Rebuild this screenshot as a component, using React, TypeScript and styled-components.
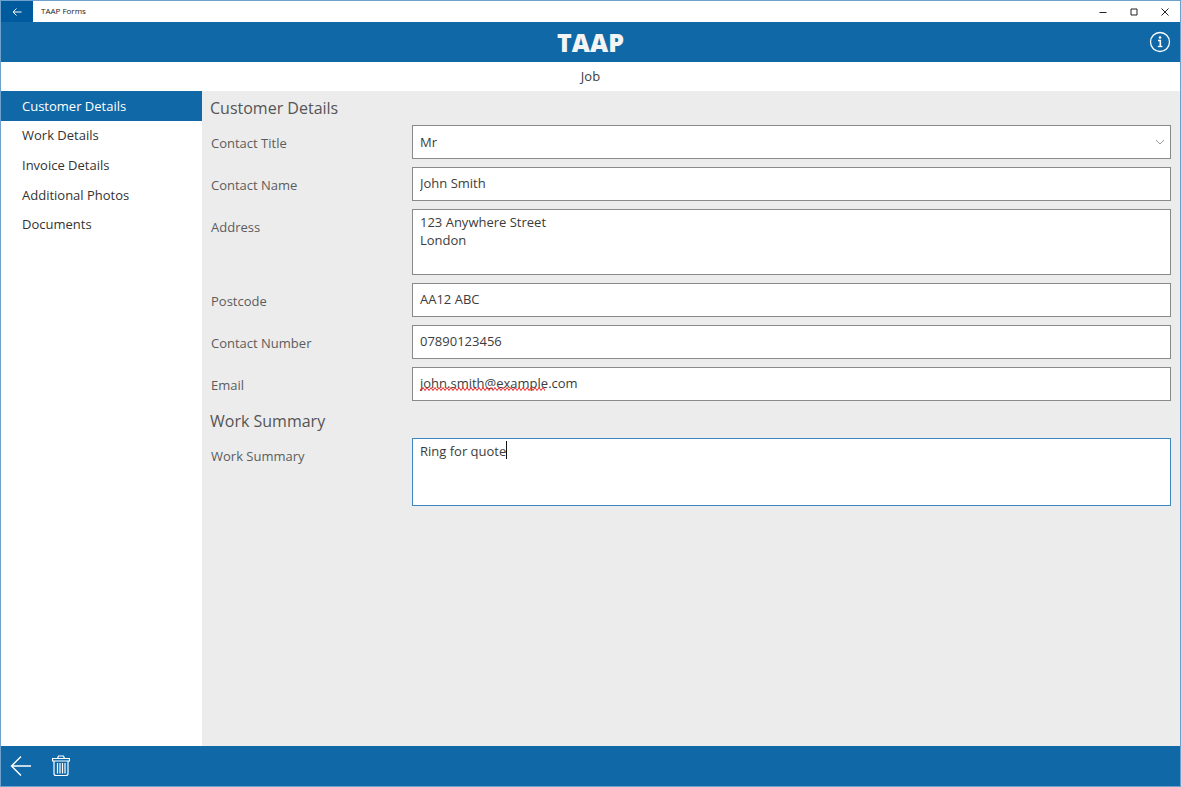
import React, { useId } from "react";
import styled, { createGlobalStyle } from "styled-components";

const blue = "#1068a6";

const GlobalStyle = createGlobalStyle`
  * { box-sizing: border-box; }
  body {
    margin: 0;
    font-family: "Open Sans", "Noto Sans", sans-serif;
    font-size: 13px;
    line-height: 18px;
    color: #3c3c3c;
    background: #fff;
  }
  button, input, select, textarea { font: inherit; color: inherit; }
`;

const Window = styled.div`
  min-height: 100vh;
  display: flex;
  flex-direction: column;
  border: 1px solid #6ea2cc;
`;

const TitleBar = styled.div`
  display: flex;
  height: 21px;
  font-size: 8px;
  color: #222;
`;

const BackButton = styled.button`
  width: 32px;
  border: 0;
  padding: 0;
  display: grid;
  place-items: center;
  background: #005a9e;
  color: #fff;
`;

const WindowTitle = styled.span`
  flex: 1;
  padding-left: 8px;
  line-height: 20px;
`;

const WindowButton = styled.button`
  width: 31px;
  border: 0;
  padding: 0;
  display: grid;
  place-items: center;
  background: none;
  color: #222;
`;

const Header = styled.header`
  display: grid;
  grid-template-columns: 1fr auto 1fr;
  align-items: center;
  height: 40px;
  padding: 0 9px;
  background: ${blue};
  color: #f4f4f4;
`;

const Logo = styled.span`
  grid-column: 2;
  font-size: 25px;
  font-weight: 800;
  line-height: 40px;
`;

const IconButton = styled.button`
  display: grid;
  place-items: center;
  justify-self: end;
  border: 0;
  padding: 0;
  background: none;
  color: #fff;
`;

const PageTitle = styled.h1`
  margin: 0;
  font-size: 13px;
  font-weight: 400;
  line-height: 29px;
  text-align: center;
`;

const Body = styled.div`
  flex: 1;
  display: flex;
`;

const Sidebar = styled.nav`
  flex: 0 0 201px;
  background: #fff;
`;

const NavList = styled.ul`
  display: grid;
  grid-auto-rows: 1fr;
  height: 148px;
  margin: 0;
  padding: 0;
  list-style: none;
`;

const NavLink = styled.a<{ $active?: boolean }>`
  display: flex;
  align-items: center;
  height: 100%;
  padding-left: 21px;
  text-decoration: none;
  color: ${(p) => (p.$active ? "#fff" : "#333")};
  background: ${(p) => (p.$active ? blue : "transparent")};
`;

const Form = styled.form`
  flex: 1;
  display: flex;
  flex-direction: column;
  gap: 4px;
  padding: 1px 9px 0 8px;
  background: #ececec;
`;

const Section = styled.section`
  display: flex;
  flex-direction: column;
`;

const SectionTitle = styled.h2`
  margin: 0;
  height: 33px;
  font-size: 16px;
  font-weight: 400;
  line-height: 32px;
  color: #555;
`;

const Rows = styled.div`
  display: grid;
  gap: 8px;
`;

const Row = styled.div`
  display: grid;
  grid-template-columns: 202px 1fr;
`;

const Label = styled.label`
  padding: 9px 0 0 1px;
  color: #5c5c5c;
`;

const Control = styled.div`
  position: relative;
  display: flex;
`;

const TextInput = styled.input`
  width: 100%;
  height: 34px;
  border: 1px solid #8a8a8a;
  border-radius: 0;
  padding: 0 7px 2px;
  background: #fff;
  outline: none;
`;

const Select = styled.select`
  width: 100%;
  height: 34px;
  appearance: none;
  border: 1px solid #8a8a8a;
  border-radius: 0;
  padding: 0 24px 0 7px;
  background: #fff;
  outline: none;
`;

const TextArea = styled.textarea<{ $active?: boolean }>`
  width: 100%;
  height: ${(p) => (p.$active ? 68 : 66)}px;
  resize: none;
  border: 1px solid ${(p) => (p.$active ? "#3f87bd" : "#8a8a8a")};
  border-radius: 0;
  padding: 3px 7px;
  background: #fff;
  outline: none;
`;

const Chevron = styled.svg`
  position: absolute;
  right: 6px;
  top: 14px;
  pointer-events: none;
`;

const Squiggle = styled.svg`
  position: absolute;
  left: 8px;
  top: 20px;
  pointer-events: none;
`;

const Caret = styled.span`
  position: absolute;
  left: 94px;
  top: 3px;
  width: 1px;
  height: 18px;
  background: #111;
  pointer-events: none;
`;

const Footer = styled.footer`
  display: flex;
  align-items: center;
  gap: 20px;
  height: 40px;
  padding-left: 9px;
  background: ${blue};
`;

function Field({ label, children }: { label: string; children: (id: string) => React.ReactNode }) {
  const id = useId();
  return (
    <Row>
      <Label htmlFor={id}>{label}</Label>
      <Control>{children(id)}</Control>
    </Row>
  );
}

const navItems = ["Customer Details", "Work Details", "Invoice Details", "Additional Photos", "Documents"];

export default function App() {
  return (
    <>
      <GlobalStyle />
      <Window>
        <TitleBar>
          <BackButton aria-label="Back">
            <svg width="10" height="8" viewBox="0 0 10 8" fill="none" stroke="currentColor">
              <path d="M9.5 4H1M4.5 0.5L1 4l3.500 3.500" />
            </svg>
          </BackButton>
          <WindowTitle>TAAP Forms</WindowTitle>
          <WindowButton aria-label="Minimise">
            <svg width="8" height="8" stroke="currentColor"><path d="M0.500 4.500h7" /></svg>
          </WindowButton>
          <WindowButton aria-label="Maximise">
            <svg width="8" height="8" fill="none" stroke="currentColor"><path d="M1 1h6v6H1z" /></svg>
          </WindowButton>
          <WindowButton aria-label="Close">
            <svg width="8" height="8" stroke="currentColor"><path d="M0.500 0.500l7 7M7.500 0.500l-7 7" /></svg>
          </WindowButton>
        </TitleBar>
        <Header>
          <Logo>TAAP</Logo>
          <IconButton aria-label="Information">
            <svg width="22" height="22" viewBox="0 0 22 22" fill="none" stroke="currentColor">
              <circle cx="11" cy="11" r="9.500" strokeWidth="1.300" />
              <circle cx="11" cy="6.500" r="1.300" fill="currentColor" stroke="none" />
              <path d="M9 9.500h2.300v6" strokeWidth="1.600" />
              <path d="M8.800 15.500h4.600" strokeWidth="1.300" />
            </svg>
          </IconButton>
        </Header>
        <PageTitle>Job</PageTitle>
        <Body>
          <Sidebar>
            <NavList>
              {navItems.map((item, i) => (
                <li key={item}>
                  <NavLink href="#" $active={i === 0}>{item}</NavLink>
                </li>
              ))}
            </NavList>
          </Sidebar>
          <Form>
            <Section>
              <SectionTitle>Customer Details</SectionTitle>
              <Rows>
                <Field label="Contact Title">
                  {(id) => (
                    <>
                      <Select id={id} defaultValue="Mr">
                        <option>Mr</option>
                      </Select>
                      <Chevron width="10" height="6" fill="none" stroke="#999">
                        <path d="M1 1l4 4 4-4" />
                      </Chevron>
                    </>
                  )}
                </Field>
                <Field label="Contact Name">
                  {(id) => <TextInput id={id} defaultValue="John Smith" />}
                </Field>
                <Field label="Address">
                  {(id) => <TextArea id={id} defaultValue={"123 Anywhere Street\nLondon"} />}
                </Field>
                <Field label="Postcode">
                  {(id) => <TextInput id={id} defaultValue="AA12 ABC" />}
                </Field>
                <Field label="Contact Number">
                  {(id) => <TextInput id={id} type="tel" defaultValue="07890123456" />}
                </Field>
                <Field label="Email">
                  {(id) => (
                    <>
                      <TextInput id={id} type="email" defaultValue="john.smith@example.com" />
                      <Squiggle width="125" height="4">
                        <defs>
                          <pattern id="wave" width="4" height="4" patternUnits="userSpaceOnUse">
                            <path d="M-1 0L1 3L3 0L5 3" transform="translate(0 0.500)" fill="none" stroke="#f02020" />
                          </pattern>
                        </defs>
                        <rect width="125" height="4" fill="url(#wave)" />
                      </Squiggle>
                    </>
                  )}
                </Field>
              </Rows>
            </Section>
            <Section>
              <SectionTitle>Work Summary</SectionTitle>
              <Rows>
                <Field label="Work Summary">
                  {(id) => (
                    <>
                      <TextArea id={id} $active defaultValue="Ring for quote" />
                      <Caret />
                    </>
                  )}
                </Field>
              </Rows>
            </Section>
          </Form>
        </Body>
        <Footer>
          <IconButton aria-label="Go back">
            <svg width="22" height="22" viewBox="0 0 22 22" fill="none" stroke="currentColor" strokeWidth="1.400">
              <path d="M21 11H1.500M11 1.500L1.500 11l9.500 9.500" />
            </svg>
          </IconButton>
          <IconButton aria-label="Delete">
            <svg width="18" height="22" viewBox="0 0 18 22" fill="none" stroke="currentColor" strokeWidth="1.200">
              <path d="M0.500 3.500h17v2.500h-17zM5.500 3.500l1-2.500h5l1 2.500M2 6v12.500q0 2 2 2h10q2 0 2-2V6M5.500 8v10.500M8 8v10.500M10.500 8v10.500M13 8v10.500" />
            </svg>
          </IconButton>
        </Footer>
      </Window>
    </>
  );
}
